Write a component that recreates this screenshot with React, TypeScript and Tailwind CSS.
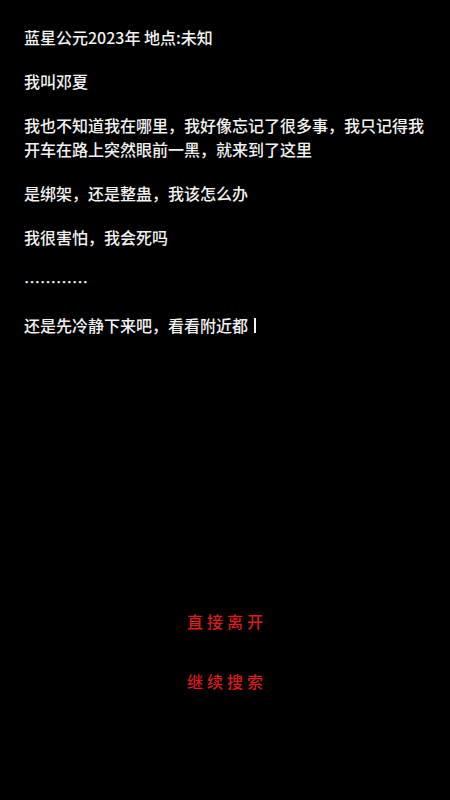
const lines: string[][] = [
  ['蓝星公元2023年 地点:未知'],
  ['我叫邓夏'],
  ['我也不知道我在哪里，我好像忘记了很多事，我只记得我', '开车在路上突然眼前一黑，就来到了这里'],
  ['是绑架，还是整蛊，我该怎么办'],
  ['我很害怕，我会死吗'],
  ['…………'],
]

export default function App() {
  return (
    <div
      className="flex h-[800px] w-[450px] flex-col bg-black text-white"
      style={{ fontFamily: '"Noto Sans CJK SC", "Noto Sans", sans-serif' }}
    >
      {/* ── Story text ── */}
      <div className="flex flex-col gap-[20px] px-[24px] pt-[25px] text-[16px] font-medium leading-[24px] text-[#f2f2f2]">
        {lines.map((para, i) => (
          <p key={i}>
            {para.map((l, j) => (
              <span key={j} className="block">
                {l}
              </span>
            ))}
          </p>
        ))}
        <p className="flex items-center">
          还是先冷静下来吧，看看附近都
          <span className="ml-[6px] inline-block h-[15px] w-[2px] bg-[#f2f2f2]" />
        </p>
      </div>

      {/* ── Choices ── */}
      <div className="mt-[272px] flex flex-col items-center gap-[36px] text-[16px] font-medium leading-[24px] tracking-[4px] text-[#d81c1c]">
        <button className="pl-[4px]">直接离开</button>
        <button className="pl-[4px]">继续搜索</button>
      </div>
    </div>
  )
}
